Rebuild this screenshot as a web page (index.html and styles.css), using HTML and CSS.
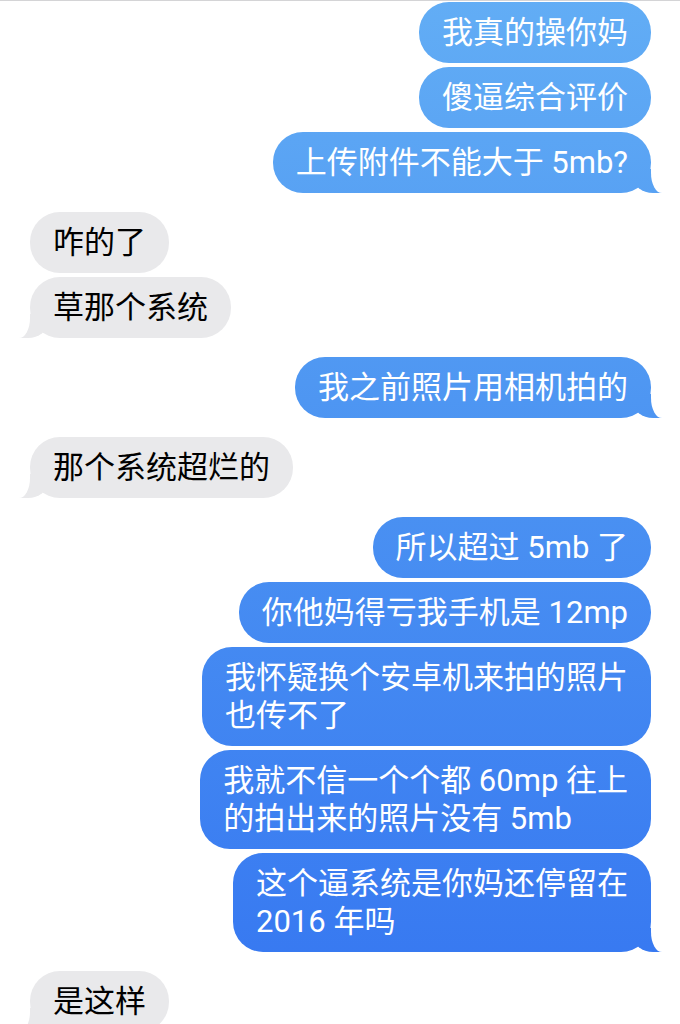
FILE: index.html
```html
<!DOCTYPE html>
<html lang="zh-CN">
<head>
<meta charset="utf-8">
<title>Messages</title>
<link rel="stylesheet" href="styles.css">
</head>
<body>
<div class="thread">
  <div class="group sent">
    <div class="bubble">我真的操你妈</div>
    <div class="bubble">傻逼综合评价</div>
    <div class="bubble tail">上传附件不能大于 5mb?</div>
  </div>
  <div class="group recv">
    <div class="bubble">咋的了</div>
    <div class="bubble tail">草那个系统</div>
  </div>
  <div class="group sent">
    <div class="bubble tail">我之前照片用相机拍的</div>
  </div>
  <div class="group recv">
    <div class="bubble tail">那个系统超烂的</div>
  </div>
  <div class="group sent">
    <div class="bubble">所以超过 5mb 了</div>
    <div class="bubble">你他妈得亏我手机是 12mp</div>
    <div class="bubble">我怀疑换个安卓机来拍的照片<br>也传不了</div>
    <div class="bubble">我就不信一个个都 60mp 往上<br>的拍出来的照片没有 5mb</div>
    <div class="bubble tail">这个逼系统是你妈还停留在<br>2016 年吗</div>
  </div>
  <div class="group recv">
    <div class="bubble tail">是这样</div>
  </div>
</div>
</body>
</html>
```
FILE: styles.css
```css
:root {
  --blue: linear-gradient(180deg, #62adf5 0px, #4e96f2 400px, #3576f1 1024px);
  --gray: #e9e9eb;
}

html, body {
  margin: 0;
  padding: 0;
  height: 1024px;
  overflow: hidden;
  background: #fff;
}

body {
  font-family: "Roboto", "Noto Sans CJK SC", sans-serif;
  font-size: 31px;
  line-height: 38px;
  border-top: 1px solid #d4d4d6;
  box-sizing: border-box;
}

.thread {
  display: flex;
  flex-direction: column;
  gap: 19px;
  padding: 1px 29px 0 30px;
}

.group {
  display: flex;
  flex-direction: column;
  gap: 4px;
}

.group.sent {
  align-items: flex-end;
}

.group.recv {
  align-items: flex-start;
}

.bubble {
  position: relative;
  isolation: isolate;
  padding: 11.5px 23px;
  border-radius: 30px;
  white-space: nowrap;
}

.sent .bubble {
  color: #fff;
  background: var(--blue);
  background-attachment: fixed;
}

.recv .bubble {
  color: #000;
  background: var(--gray);
}

.bubble.tail::before,
.bubble.tail::after {
  content: "";
  position: absolute;
  bottom: 0;
  z-index: -1;
}

.sent .bubble.tail::before {
  right: -12px;
  width: 30px;
  height: 24px;
  background: var(--blue);
  background-attachment: fixed;
  border-bottom-left-radius: 20px 16px;
}

.sent .bubble.tail::after {
  left: 100%;
  width: 14px;
  height: 26px;
  background: #fff;
  border-bottom-left-radius: 11px 20px;
}

.recv .bubble.tail::before {
  left: -12px;
  width: 30px;
  height: 24px;
  background: var(--gray);
  border-bottom-right-radius: 20px 16px;
}

.recv .bubble.tail::after {
  right: 100%;
  width: 14px;
  height: 26px;
  background: #fff;
  border-bottom-right-radius: 11px 20px;
}
```
